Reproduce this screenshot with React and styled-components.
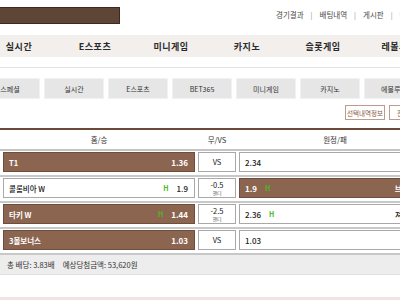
import React from 'react';
import styled, { createGlobalStyle } from 'styled-components';

const GlobalStyle = createGlobalStyle`
    body {
        margin: 0;
        overflow: hidden;
        background: #fff;
        font-family: "Noto Sans CJK KR", "Noto Sans", sans-serif;
    }
`

const Page = styled.div`
    width: 434px;
    height: 300px;
    display: flex;
    flex-direction: column;
`

const Header = styled.div`
    height: 35px;
    display: flex;
    align-items: flex-start;
`

const LogoBar = styled.div`
    width: 119px;
    height: 15px;
    margin-top: 7px;
    background: #5f4536;
    border: 1px solid #3d2a1f;
    border-left: none;
`

const TopLinks = styled.div`
    display: flex;
    align-items: center;
    gap: 7px;
    margin-top: 9px;
    margin-left: 156px;
    font-size: 7.5px;
    color: #4a4a4a;
    white-space: nowrap;
`

const Sep = styled.span`
    color: #888;
    font-size: 7px;
`

const Nav = styled.div`
    height: 22px;
    margin-left: -19px;
    width: 480px;
    display: flex;
    align-items: center;
    background: #f2efec;
`

const NavItem = styled.div`
    width: 76px;
    text-align: center;
    font-size: 9px;
    font-weight: 700;
    color: #2a2a2a;
    letter-spacing: 0.5px;
    white-space: nowrap;
`

const Divider = styled.div`
    margin-top: 10px;
    height: 1px;
    width: 480px;
    background: #e4e4e4;
`

const Tabs = styled.div`
    margin-top: 10px;
    margin-left: -20px;
    display: flex;
    gap: 4px;
`

const Tab = styled.div`
    flex: 0 0 60px;
    height: 21px;
    display: flex;
    align-items: center;
    justify-content: center;
    background: #e6e6e6;
    border: 1px solid #f2f2f2;
    box-sizing: border-box;
    font-size: 7px;
    color: #333;
    white-space: nowrap;
`

const Actions = styled.div`
    margin-top: 6px;
    padding-right: 5px;
    display: flex;
    justify-content: flex-end;
    gap: 4px;
`

const ActionButton = styled.div`
    width: 40px;
    height: 15px;
    box-sizing: border-box;
    border: 1px solid #c09a8a;
    display: flex;
    align-items: center;
    justify-content: center;
    font-size: 6.5px;
    color: #8a5a48;
    white-space: nowrap;
    overflow: hidden;
`

const Table = styled.div`
    margin-top: 8px;
    border-top: 2px solid #6b4a37;
    padding: 0 3px;
`

const Columns = styled.div`
    display: grid;
    grid-template-columns: 192px 38px 192px;
    column-gap: 3px;
`

const HeadRow = styled(Columns)`
    height: 19px;
    align-items: center;
    border-bottom: 2px solid #c4c4c4;
    margin: 0 -3px;
    padding: 0 3px;
    font-size: 7.5px;
    color: #333;
    text-align: center;
`

const BetRow = styled(Columns)`
    padding: 1px 3px 3px;
    margin: 0 -3px;
    border-bottom: 2px solid #c8c8c8;
`

const OddBox = styled.div`
    height: 20px;
    box-sizing: border-box;
    display: flex;
    align-items: center;
    gap: 8px;
    padding: 0 6px 0 5px;
    font-size: 7.5px;
    font-weight: ${props => props.selected ? 600 : 500};
    color: ${props => props.selected ? '#fff' : '#222'};
    background: ${props => props.selected ? '#8c6551' : '#fff'};
    border: 1px solid ${props => props.selected ? '#6e4e3d' : '#a8a8a8'};
    white-space: nowrap;
`

const Name = styled.span`
    flex: 1;
    text-align: ${props => props.right ? 'right' : 'left'};
`

const Odd = styled.span`
    font-size: 8px;
`

const Mark = styled.span`
    color: #4cb81e;
    font-size: 7px;
    font-weight: 700;
`

const DrawBox = styled.div`
    height: 20px;
    box-sizing: border-box;
    border: 1px solid #a8a8a8;
    background: #fff;
    display: flex;
    flex-direction: column;
    align-items: center;
    justify-content: center;
    font-size: 7.5px;
    color: #222;
    line-height: 1;
`

const Small = styled.span`
    font-size: 5px;
    color: #555;
    margin-top: 1px;
`

const Summary = styled.div`
    height: 19px;
    margin: 0 -3px;
    padding-left: 7px;
    display: flex;
    align-items: center;
    gap: 8px;
    background: #ededed;
    border-bottom: 1px solid #e0e0e0;
    font-size: 7.5px;
    color: #333;
`

const Spacer = styled.div`
    flex: 1;
`

const Footer = styled.div`
    height: 3px;
    width: 480px;
    margin-left: -19px;
    background: #efe5e2;
`

const navItems = ['실시간', 'E스포츠', '미니게임', '카지노', '슬롯게임', '레볼루션'];
const tabs = ['스페셜', '실시간', 'E스포츠', 'BET365', '미니게임', '카지노', '에볼루션'];

const bets = [
    { home: 'T1', homeOdd: '1.36', pick: 'home', draw: 'VS', awayOdd: '2.34', away: '' },
    { home: '콜롬비아 W', homeOdd: '1.9', pick: 'away', draw: '-0.5', awayOdd: '1.9', away: '브라질 W', mark: true },
    { home: '타키 W', homeOdd: '1.44', pick: 'home', draw: '-2.5', awayOdd: '2.36', away: '져지아 W', mark: true },
    { home: '3볼보너스', homeOdd: '1.03', pick: 'home', draw: 'VS', awayOdd: '1.03', away: '' },
];

export default function App() {
    return (
        <Page>
            <GlobalStyle />
            <Header>
                <LogoBar />
                <TopLinks>
                    <span>경기결과</span><Sep>|</Sep>
                    <span>배팅내역</span><Sep>|</Sep>
                    <span>게시판</span><Sep>|</Sep>
                    <span>이벤트</span>
                </TopLinks>
            </Header>
            <Nav>
                {navItems.map(item => <NavItem key={item}>{item}</NavItem>)}
            </Nav>
            <Divider />
            <Tabs>
                {tabs.map(tab => <Tab key={tab}>{tab}</Tab>)}
            </Tabs>
            <Actions>
                <ActionButton>선택내역정보</ActionButton>
                <ActionButton>전체삭제</ActionButton>
            </Actions>
            <Table>
                <HeadRow>
                    <span>홈/승</span>
                    <span>무/VS</span>
                    <span>원정/패</span>
                </HeadRow>
                {bets.map(bet => (
                    <BetRow key={bet.home}>
                        <OddBox selected={bet.pick === 'home'}>
                            <Name>{bet.home}</Name>
                            {bet.mark && <Mark>H</Mark>}
                            <Odd>{bet.homeOdd}</Odd>
                        </OddBox>
                        <DrawBox>
                            {bet.draw}
                            {bet.draw !== 'VS' && <Small>핸디</Small>}
                        </DrawBox>
                        <OddBox selected={bet.pick === 'away'}>
                            <Odd>{bet.awayOdd}</Odd>
                            {bet.mark && <Mark>H</Mark>}
                            <Name right>{bet.away}</Name>
                        </OddBox>
                    </BetRow>
                ))}
                <Summary>
                    <span>총 배당: 3.83배</span>
                    <span>예상당첨금액: 53,620원</span>
                </Summary>
            </Table>
            <Spacer />
            <Footer />
        </Page>
    );
}
